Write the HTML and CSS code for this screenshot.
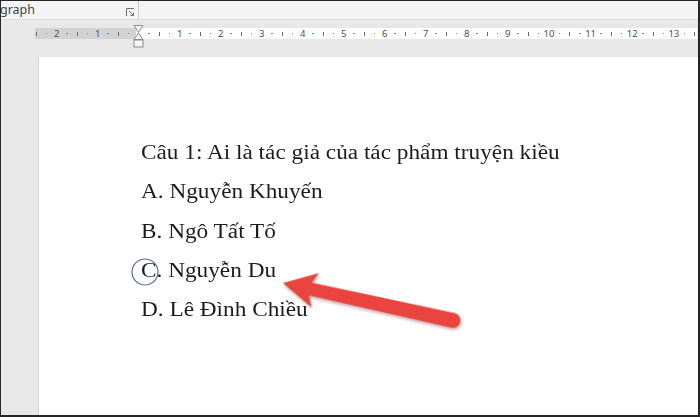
FILE: index.html
```html
<!DOCTYPE html>
<html lang="vi">
<head>
<meta charset="utf-8">
<title>Câu 1</title>
<link rel="stylesheet" href="styles.css">
</head>
<body>
<div class="app">
  <div class="ribbon">
    <div class="group">
      <span class="group-label">graph</span>
      <svg class="launcher" width="9" height="9" viewBox="0 0 9 9">
        <path d="M0.5 8V0.5H8" fill="none" stroke="#707070" stroke-width="1"/>
        <path d="M3 3L7.5 7.5M7.5 4.5V7.5H4.5" fill="none" stroke="#707070" stroke-width="1"/>
      </svg>
    </div>
    <div class="sep"></div>
  </div>
  <div class="workspace">
    <div class="ruler">
      <div class="track">
        <div class="ticks">
          <span class="s t"></span><span class="s d"></span><span class="s">2</span><span class="s d"></span><span class="s t"></span><span class="s d"></span><span class="s">1</span><span class="s d"></span><span class="s t"></span><span class="s d"></span>
          <span class="s"></span>
          <span class="s d"></span><span class="s t"></span><span class="s d"></span><span class="s">1</span>
          <span class="s d"></span><span class="s t"></span><span class="s d"></span><span class="s">2</span>
          <span class="s d"></span><span class="s t"></span><span class="s d"></span><span class="s">3</span>
          <span class="s d"></span><span class="s t"></span><span class="s d"></span><span class="s">4</span>
          <span class="s d"></span><span class="s t"></span><span class="s d"></span><span class="s">5</span>
          <span class="s d"></span><span class="s t"></span><span class="s d"></span><span class="s">6</span>
          <span class="s d"></span><span class="s t"></span><span class="s d"></span><span class="s">7</span>
          <span class="s d"></span><span class="s t"></span><span class="s d"></span><span class="s">8</span>
          <span class="s d"></span><span class="s t"></span><span class="s d"></span><span class="s">9</span>
          <span class="s d"></span><span class="s t"></span><span class="s d"></span><span class="s">10</span>
          <span class="s d"></span><span class="s t"></span><span class="s d"></span><span class="s">11</span>
          <span class="s d"></span><span class="s t"></span><span class="s d"></span><span class="s">12</span>
          <span class="s d"></span><span class="s t"></span><span class="s d"></span><span class="s">13</span>
          <span class="s d"></span><span class="s t"></span><span class="s d"></span>
        </div>
      </div>
      <svg class="indent" width="11" height="23" viewBox="0 0 11 23">
        <path d="M1 0.5H10L5.5 7.5Z" fill="#f6f6f6" stroke="#8c8c8c" stroke-width="1"/>
        <path d="M5.5 8L10 14.5H1Z" fill="#f6f6f6" stroke="#8c8c8c" stroke-width="1"/>
        <rect x="1" y="15" width="9" height="7" fill="#f6f6f6" stroke="#8c8c8c" stroke-width="1"/>
      </svg>
    </div>
    <div class="page">
      <div class="content">
        <p>Câu 1: Ai là tác giả của tác phẩm truyện kiều</p>
        <p>A. Nguyễn Khuyến</p>
        <p>B. Ngô Tất Tố</p>
        <p>C. Nguyễn Du</p>
        <p>D. Lê Đình Chiều</p>
      </div>
      <svg class="marks">
        <circle cx="106" cy="215" r="13" fill="none" stroke="#5b6b92" stroke-width="1.2"/>
        <g class="arrow" transform="translate(244 226) rotate(12.4)">
          <path d="M0 0L33 -17.5L28 -6.5L174 -7.5A7.5 7.5 0 0 1 174 7.5L28 6.5L33 17.5Z" fill="#e9443f"/>
        </g>
      </svg>
    </div>
  </div>
</div>
</body>
</html>
```
FILE: styles.css
```css
html, body {
  margin: 0;
  padding: 0;
}
body {
  background: #262626;
  width: 700px;
  height: 417px;
  overflow: hidden;
}
.app {
  margin: 1px 2px 2px 1px;
  height: 414px;
  display: flex;
  flex-direction: column;
  background: #e8e8e8;
  overflow: hidden;
}
.ribbon {
  flex: 0 0 18px;
  background: #f4f4f4;
  border-bottom: 1px solid #dcdcdc;
  display: flex;
  align-items: stretch;
}
.group {
  width: 137px;
  box-sizing: border-box;
  padding-right: 3px;
  display: flex;
  align-items: center;
  justify-content: space-between;
}
.group-label {
  font: 12.5px "Noto Sans", "Open Sans", sans-serif;
  color: #444;
  margin-left: -1px;
  margin-top: -2px;
}
.launcher {
  display: block;
  margin-top: 4px;
}
.sep {
  width: 1px;
  background: #c9c9c9;
  margin-top: -1px;
}
.workspace {
  flex: 1;
  display: flex;
  flex-direction: column;
  background: #e8e8e8;
}
.ruler {
  position: relative;
  margin: 8px 1px 0 34px;
  height: 11px;
  background: linear-gradient(to right, #d2d2d2 0, #d2d2d2 101px, #ffffff 101px);
}
.track {
  height: 100%;
  overflow: hidden;
}
.ticks {
  display: flex;
  height: 100%;
  margin-left: -4px;
}
.s {
  flex: 0 0 10.25px;
  display: flex;
  align-items: center;
  justify-content: center;
  font: 9.5px "Noto Sans", "Open Sans", sans-serif;
  color: #505050;
  white-space: nowrap;
}
.t::before {
  content: "";
  width: 1px;
  height: 4px;
  background: #6a6a6a;
}
.d::before {
  content: "";
  width: 1.5px;
  height: 1.5px;
  background: #8a8a8a;
}
.indent {
  position: absolute;
  left: 98px;
  top: -3px;
  display: block;
}
.page {
  position: relative;
  flex: 1;
  margin: 18px 0 0 38px;
  background: #ffffff;
  box-shadow: -1px 0 1px rgba(0, 0, 0, 0.08);
}
.content {
  padding: 76px 0 0 102px;
  font-family: "Liberation Serif", "Times New Roman", serif;
  font-size: 20.5px;
  line-height: 39.3px;
  color: #1c1c1c;
  transform: scaleX(1.135);
  transform-origin: 102px 0;
}
.content p {
  margin: 0;
}
.marks {
  position: absolute;
  left: 0;
  top: 0;
  width: 100%;
  height: 100%;
  pointer-events: none;
}
.arrow {
  filter: drop-shadow(1px 2px 1.5px rgba(120, 20, 20, 0.35));
}
```
